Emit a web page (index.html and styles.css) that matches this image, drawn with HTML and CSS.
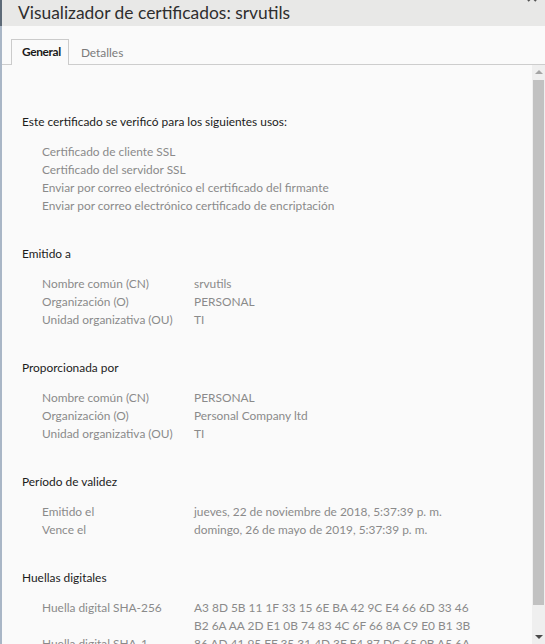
FILE: index.html
```html
<!DOCTYPE html>
<html lang="es">
<head>
<meta charset="utf-8">
<link rel="stylesheet" href="styles.css">
</head>
<body>
<div class="window">
  <header class="titlebar">
    <h1 class="title">Visualizador de certificados: srvutils</h1>
    <svg class="close" width="12" height="12" viewBox="0 0 12 12"><path d="M2 2 L10 10 M10 2 L2 10" stroke="#555" stroke-width="2" fill="none"/></svg>
  </header>
  <nav class="tabs">
    <span class="tab active">General</span>
    <span class="tab">Detalles</span>
  </nav>
  <div class="body">
    <main class="content">
      <section class="section">
        <h2 class="heading">Este certificado se verificó para los siguientes usos:</h2>
        <ul class="uses">
          <li>Certificado de cliente SSL</li>
          <li>Certificado del servidor SSL</li>
          <li>Enviar por correo electrónico el certificado del firmante</li>
          <li>Enviar por correo electrónico certificado de encriptación</li>
        </ul>
      </section>
      <section class="section">
        <h2 class="heading">Emitido a</h2>
        <dl class="fields">
          <dt>Nombre común (CN)</dt><dd>srvutils</dd>
          <dt>Organización (O)</dt><dd>PERSONAL</dd>
          <dt>Unidad organizativa (OU)</dt><dd>TI</dd>
        </dl>
      </section>
      <section class="section">
        <h2 class="heading">Proporcionada por</h2>
        <dl class="fields">
          <dt>Nombre común (CN)</dt><dd>PERSONAL</dd>
          <dt>Organización (O)</dt><dd>Personal Company ltd</dd>
          <dt>Unidad organizativa (OU)</dt><dd>TI</dd>
        </dl>
      </section>
      <section class="section">
        <h2 class="heading">Período de validez</h2>
        <dl class="fields">
          <dt>Emitido el</dt><dd>jueves, 22 de noviembre de 2018, 5:37:39 p. m.</dd>
          <dt>Vence el</dt><dd>domingo, 26 de mayo de 2019, 5:37:39 p. m.</dd>
        </dl>
      </section>
      <section class="section">
        <h2 class="heading">Huellas digitales</h2>
        <dl class="fields">
          <dt>Huella digital SHA-256</dt><dd>A3 8D 5B 11 1F 33 15 6E BA 42 9C E4 66 6D 33 46<br>B2 6A AA 2D E1 0B 74 83 4C 6F 66 8A C9 E0 B1 3B</dd>
          <dt>Huella digital SHA-1</dt><dd>86 AD 41 95 FF 35 31 4D 3F F4 87 DC 65 0B A5 6A<br>4E 3B 27 91 C0 5D</dd>
        </dl>
      </section>
    </main>
    <div class="scrollbar">
      <span class="arrow up"></span>
      <span class="thumb"></span>
      <span class="arrow down"></span>
    </div>
  </div>
</div>
</body>
</html>
```
FILE: styles.css
```css
html, body {
  margin: 0;
  padding: 0;
  height: 100%;
  overflow: hidden;
}
body {
  background: #fafafa;
  font-family: "Lato", "Noto Sans", sans-serif;
  font-size: 11.9px;
  color: #2b2b2b;
}
.window {
  height: 644px;
  display: flex;
  flex-direction: column;
  border-left: 2px solid #a9b6c6;
  box-sizing: border-box;
  position: relative;
}
.window::before {
  content: "";
  position: absolute;
  left: -2px;
  top: 0;
  width: 2px;
  height: 26px;
  background: #5d6a78;
}
.titlebar {
  height: 26px;
  flex: none;
  background: #e8e8e7;
  display: flex;
  align-items: center;
  position: relative;
}
.title {
  margin: 0 0 0 16px;
  font-weight: normal;
  font-size: 17.4px;
  line-height: 24px;
  color: #2e2e2e;
}
.close {
  position: absolute;
  right: 7px;
  top: -9px;
}
.tabs {
  flex: none;
  height: 39px;
  padding-left: 9px;
  box-sizing: border-box;
  display: flex;
  align-items: flex-end;
  border-bottom: 1px solid #cdcdcd;
}
.tab {
  height: 24px;
  line-height: 24px;
  padding: 0 11px;
  color: #7a7a7a;
  margin-bottom: -1px;
  border: 1px solid transparent;
  border-bottom: none;
}
.tab.active {
  color: #1a1a1a;
  font-weight: bold;
  letter-spacing: -0.35px;
  padding: 0 7px 0 10px;
  background: #fafafa;
  border-color: #cbcbcb;
  height: 25px;
}
.body {
  flex: 1;
  display: flex;
  min-height: 0;
}
.content {
  flex: 1;
  overflow: hidden;
  padding: 48px 0 0 20px;
}
.section {
  margin-bottom: 30px;
}
.heading {
  margin: 0 0 12px;
  font-size: 11.9px;
  font-weight: normal;
  line-height: 18px;
  color: #1c1c1c;
}
.uses {
  list-style: none;
  margin: 0;
  padding: 0 0 0 20px;
  color: #8a8a8a;
  line-height: 18px;
}
.fields {
  margin: 0;
  padding-left: 20px;
  display: grid;
  grid-template-columns: 152px 1fr;
  line-height: 18px;
  color: #8a8a8a;
}
.fields dt, .fields dd {
  margin: 0;
  white-space: nowrap;
}
.scrollbar {
  flex: none;
  width: 13px;
  background: #efefef;
  display: flex;
  flex-direction: column;
  align-items: center;
}
.arrow {
  width: 0;
  height: 0;
  border-left: 4px solid transparent;
  border-right: 4px solid transparent;
  flex: none;
}
.arrow.up {
  margin-top: 5px;
  border-bottom: 4px solid #a5a5a5;
}
.arrow.down {
  margin-top: 30px;
  border-top: 4px solid #4a4a4a;
}
.thumb {
  margin-top: 6px;
  width: 11px;
  height: 525px;
  background: #c1c1c1;
  flex: none;
}
```
